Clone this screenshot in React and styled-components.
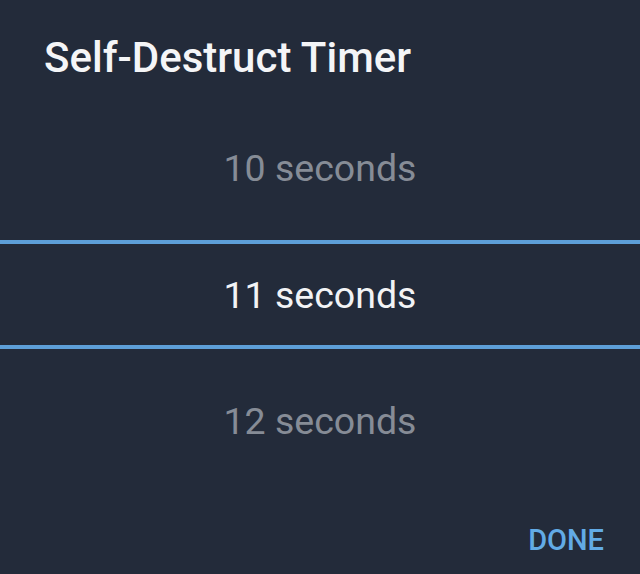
import React from 'react'
import styled, { createGlobalStyle } from 'styled-components'

const GlobalStyle = createGlobalStyle`
  html, body {
    margin: 0;
    padding: 0;
    background: #232b3a;
  }
`

const Dialog = styled.div`
  display: flex;
  flex-direction: column;
  width: 640px;
  height: 574px;
  background: #232b3a;
  font-family: Roboto, 'Noto Sans', sans-serif;
  overflow: hidden;
`

const Title = styled.h1`
  margin: 0;
  padding: 34px 0 0 44px;
  font-size: 42px;
  line-height: 48px;
  font-weight: 500;
  color: #f4f5f7;
`

const Picker = styled.div`
  display: flex;
  flex-direction: column;
  margin-top: 24px;
`

const Option = styled.div`
  display: flex;
  align-items: center;
  justify-content: center;
  height: 126px;
  font-size: 37.5px;
  line-height: 1;
  color: #868c96;
`

const Selected = styled(Option)`
  box-sizing: border-box;
  height: 109px;
  margin: 8px 0 10px;
  padding-top: 2px;
  border-top: 4px solid #5d9fd8;
  border-bottom: 4px solid #5d9fd8;
  color: #f2f3f5;
`

const Footer = styled.div`
  display: flex;
  justify-content: flex-end;
  margin-top: 39px;
  padding-right: 36px;
`

const DoneButton = styled.button`
  border: 0;
  background: none;
  padding: 0;
  font-family: inherit;
  font-size: 29px;
  line-height: 32px;
  font-weight: 500;
  color: #62abe6;
  cursor: pointer;
`

const App = () => {
  return (
    <Dialog>
      <GlobalStyle />
      <Title>Self-Destruct Timer</Title>
      <Picker>
        <Option>10 seconds</Option>
        <Selected>11 seconds</Selected>
        <Option>12 seconds</Option>
      </Picker>
      <Footer>
        <DoneButton>DONE</DoneButton>
      </Footer>
    </Dialog>
  )
}

export default App
